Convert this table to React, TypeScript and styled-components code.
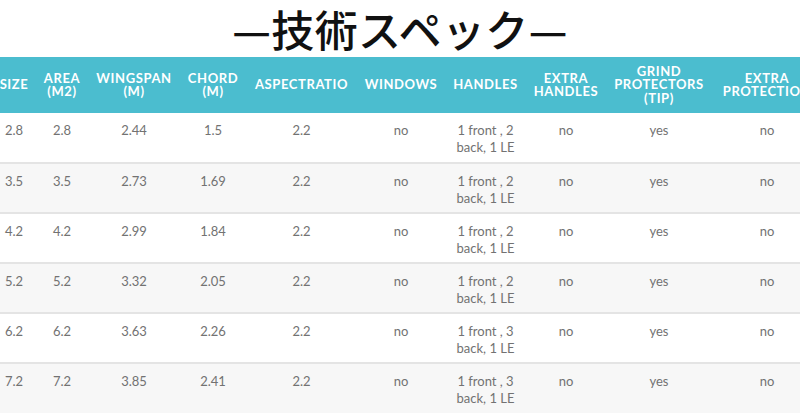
import React from "react";
import styled, { createGlobalStyle } from "styled-components";

const GlobalStyle = createGlobalStyle`
  html, body {
    margin: 0;
    padding: 0;
    background: #ffffff;
    overflow: hidden;
  }
  body {
    font-family: Lato, "Open Sans", sans-serif;
  }
`;

const Page = styled.div`
  width: 800px;
  height: 414px;
  overflow: hidden;
  background: #ffffff;
`;

const Title = styled.h2`
  margin: 0;
  height: 57px;
  line-height: 56px;
  text-align: center;
  font-family: "Noto Sans CJK JP", "Noto Sans", sans-serif;
  font-size: 43px;
  font-weight: 500;
  color: #111;
  letter-spacing: 0.4px;
`;

const TableWrap = styled.div`
  margin-left: -8px;
  width: 830px;
`;

const Table = styled.table`
  border-collapse: collapse;
  table-layout: fixed;
  width: 830px;
`;

const HeadCell = styled.th`
  background: #4bbdcf;
  color: #ffffff;
  font-family: Lato, sans-serif;
  font-weight: 700;
  font-size: 13px;
  line-height: 13.5px;
  letter-spacing: 0.6px;
  text-transform: uppercase;
  text-align: center;
  vertical-align: middle;
  height: 56px;
  padding: 0 6px;
  box-sizing: border-box;
  white-space: normal;
`;

const Row = styled.tr<{ $alt: boolean }>`
  background: ${({ $alt }) => ($alt ? "#f7f7f7" : "#ffffff")};
  border-top: 2px solid #e4e4e4;
  &:first-child {
    border-top: none;
  }
`;

const Cell = styled.td`
  font-family: Lato, sans-serif;
  font-size: 13px;
  line-height: 17px;
  color: #727272;
  text-align: center;
  vertical-align: top;
  padding: 9px 8px 0;
  height: 50px;
  box-sizing: border-box;
`;

const columns: { label: string[]; width: number }[] = [
  { label: ["size"], width: 44 },
  { label: ["area", "(m2)"], width: 52 },
  { label: ["wingspan", "(m)"], width: 92 },
  { label: ["chord", "(m)"], width: 66 },
  { label: ["aspectratio"], width: 111 },
  { label: ["windows"], width: 88 },
  { label: ["handles"], width: 81 },
  { label: ["extra", "handles"], width: 80 },
  { label: ["grind", "protectors", "(tip)"], width: 106 },
  { label: ["extra", "protection"], width: 110 },
];

const rows = [
  ["2.8", "2.8", "2.44", "1.5", "2.2", "no", "1 front , 2 back, 1 LE", "no", "yes", "no"],
  ["3.5", "3.5", "2.73", "1.69", "2.2", "no", "1 front , 2 back, 1 LE", "no", "yes", "no"],
  ["4.2", "4.2", "2.99", "1.84", "2.2", "no", "1 front , 2 back, 1 LE", "no", "yes", "no"],
  ["5.2", "5.2", "3.32", "2.05", "2.2", "no", "1 front , 2 back, 1 LE", "no", "yes", "no"],
  ["6.2", "6.2", "3.63", "2.26", "2.2", "no", "1 front , 3 back, 1 LE", "no", "yes", "no"],
  ["7.2", "7.2", "3.85", "2.41", "2.2", "no", "1 front , 3 back, 1 LE", "no", "yes", "no"],
];

const App: React.FC = () => {
  return (
    <Page>
      <GlobalStyle />
      <Title>—技術スペック—</Title>
      <TableWrap>
        <Table>
          <colgroup>
            {columns.map((c, i) => (
              <col key={i} style={{ width: c.width }} />
            ))}
          </colgroup>
          <thead>
            <tr>
              {columns.map((c, i) => (
                <HeadCell key={i}>
                  {c.label.map((line, j) => (
                    <React.Fragment key={j}>
                      {j > 0 && <br />}
                      {line}
                    </React.Fragment>
                  ))}
                </HeadCell>
              ))}
            </tr>
          </thead>
          <tbody>
            {rows.map((r, i) => (
              <Row key={i} $alt={i % 2 === 1}>
                {r.map((v, j) => (
                  <Cell key={j}>{v}</Cell>
                ))}
              </Row>
            ))}
          </tbody>
        </Table>
      </TableWrap>
    </Page>
  );
};

export default App;
